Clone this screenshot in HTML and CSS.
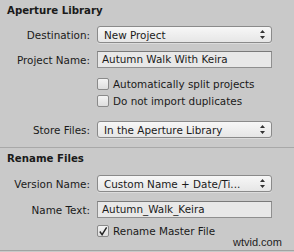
FILE: index.html
```html
<!DOCTYPE html>
<html>
<head>
<meta charset="utf-8">
<link rel="stylesheet" href="styles.css">
</head>
<body>
<div class="panel">
  <section class="group first">
    <h2 class="heading">Aperture Library</h2>
    <div class="row"><span class="label">Destination:</span><div class="popup"><span class="val">New Project</span><span class="arrows"><svg width="5" height="9" viewBox="0 0 5 9"><path d="M2.5 0 L5 3 L0 3 Z M2.5 9 L5 6 L0 6 Z" fill="#333"/></svg></span></div></div>
    <div class="row"><span class="label">Project Name:</span><div class="field">Autumn Walk With Keira</div></div>
    <div class="row check-row"><span class="label"></span><label class="check"><span class="box"></span>Automatically split projects</label></div>
    <div class="row check-row second"><span class="label"></span><label class="check"><span class="box"></span>Do not import duplicates</label></div>
    <div class="row store"><span class="label">Store Files:</span><div class="popup"><span class="val">In the Aperture Library</span><span class="arrows"><svg width="5" height="9" viewBox="0 0 5 9"><path d="M2.5 0 L5 3 L0 3 Z M2.5 9 L5 6 L0 6 Z" fill="#333"/></svg></span></div></div>
  </section>
  <section class="group second-group">
    <h2 class="heading">Rename Files</h2>
    <div class="row"><span class="label">Version Name:</span><div class="popup"><span class="val">Custom Name + Date/Ti...</span><span class="arrows"><svg width="5" height="9" viewBox="0 0 5 9"><path d="M2.5 0 L5 3 L0 3 Z M2.5 9 L5 6 L0 6 Z" fill="#333"/></svg></span></div></div>
    <div class="row"><span class="label">Name Text:</span><div class="field">Autumn_Walk_Keira</div></div>
    <div class="row check-row last"><span class="label"></span><label class="check"><span class="box checked"><svg width="11" height="11" viewBox="0 0 11 11"><path d="M2 5.5 L4.5 9 L9.5 1" fill="none" stroke="#222" stroke-width="1.6"/></svg></span>Rename Master File</label></div>
  </section>
  <div class="watermark">wtvid.com</div>
</div>
</body>
</html>
```
FILE: styles.css
```css
html, body {
  margin: 0;
  padding: 0;
}
body {
  width: 294px;
  height: 252px;
  background: #c9c9c9;
  font-family: "DejaVu Sans", "Lucida Grande", sans-serif;
  font-size: 10.4px;
  color: #1a1a1a;
  overflow: hidden;
}
.panel {
  position: relative;
  height: 250px;
  border-bottom: 1px solid #a3a3a3;
}
.group {
  padding: 4px 0 0 0;
}
.group.first {
  height: 143px;
  border-bottom: 1px solid #a8a8a8;
}
.heading {
  margin: 0 0 0 7px;
  font-size: 10.2px;
  font-weight: bold;
  line-height: 14px;
  height: 16px;
}
.row {
  display: grid;
  grid-template-columns: 90px 175px;
  column-gap: 7px;
  align-items: center;
  height: 17px;
  margin-top: 8px;
}
.group.first .row:nth-of-type(1) { margin-top: 6px; }
.second-group .row:nth-of-type(1) { margin-top: 7px; }
.second-group .row:nth-of-type(2) { margin-top: 9px; }
.row.check-row { height: 12px; margin-top: 10px; }
.row.check-row.second { margin-top: 5px; }
.row.store { margin-top: 14px; }
.row.last { margin-top: 7px; }
.label {
  text-align: right;
  white-space: nowrap;
}
.popup {
  box-sizing: border-box;
  height: 17px;
  border: 1px solid #8a8a8a;
  border-radius: 3px;
  background: linear-gradient(#f7f7f7, #e6e6e6);
  display: flex;
  align-items: center;
  justify-content: space-between;
  padding: 0 6px 0 6px;
  box-shadow: 0 1px 0 rgba(255,255,255,0.35);
}
.arrows { display: flex; align-items: center; }
.field {
  box-sizing: border-box;
  height: 17px;
  border: 1px solid #8f8f8f;
  border-top-color: #7a7a7a;
  background: #e8e8e8;
  padding: 0 4px;
  line-height: 15px;
}
.check {
  display: flex;
  align-items: center;
  white-space: nowrap;
}
.box {
  box-sizing: border-box;
  width: 12px;
  height: 12px;
  border: 1px solid #8a8a8a;
  border-radius: 2px;
  background: linear-gradient(#f4f4f4, #dedede);
  margin-right: 4px;
  display: flex;
  align-items: center;
  justify-content: center;
  flex: none;
}
.watermark {
  position: absolute;
  left: 233px;
  top: 236px;
  font-family: "Liberation Sans", Arial, sans-serif;
  font-size: 11px;
  color: #222;
}
```
